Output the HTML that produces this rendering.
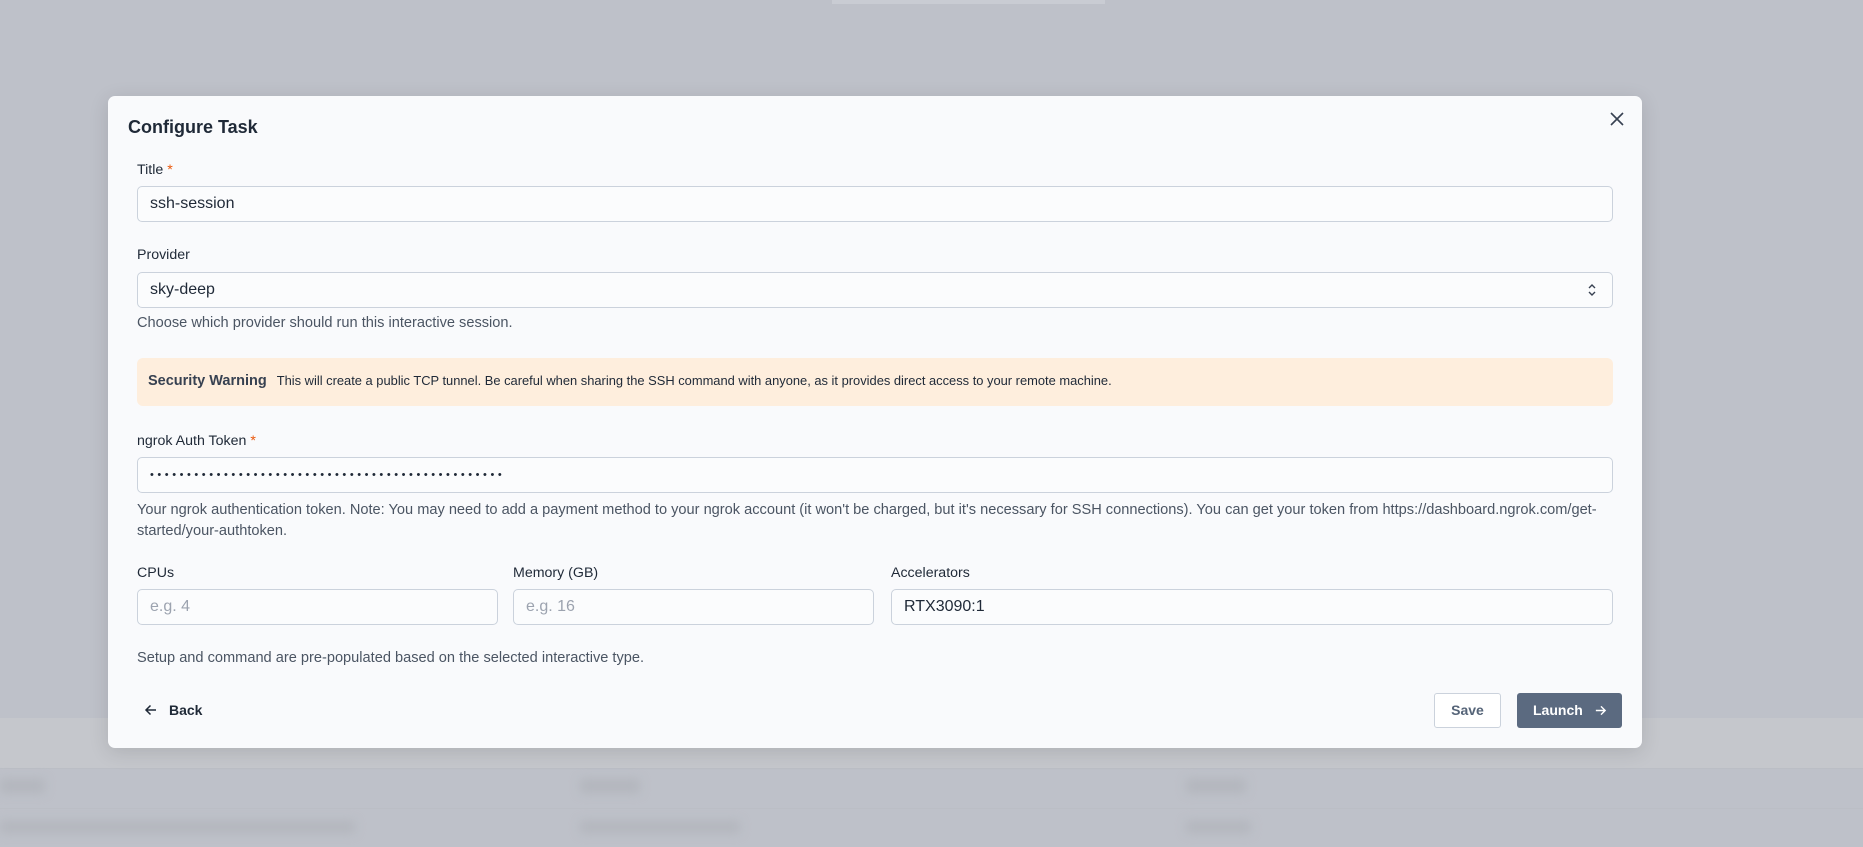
<!DOCTYPE html>
<html><head><meta charset="utf-8"><style>
*{box-sizing:border-box;margin:0;padding:0}
body{width:1863px;height:847px;background:#bec1c9;font-family:"Liberation Sans",sans-serif;position:relative;overflow:hidden;color:#1f2937}
.a{position:absolute;white-space:nowrap}
.modal{position:absolute;left:108px;top:96px;width:1534px;height:652px;background:#f9fafc;border-radius:7px;box-shadow:0 4px 20px rgba(0,0,0,.12)}
.lbl{font-size:14.2px;color:#1f2937}
.star{color:#ea580c}
.inp{position:absolute;height:36px;border:1px solid #cbd2dc;border-radius:5px;background:#fbfcfd;font-size:16px;padding:0 12px;line-height:34px;color:#1f2937}
.help{font-size:14.6px;color:#4b5563}
.blur{position:absolute;background:#b3b6bd;height:14px;border-radius:3px;filter:blur(5px)}
</style></head><body>
<div class="a" style="left:832px;top:0;width:273px;height:4px;background:#c9ccd3"></div>
<div class="a" style="left:0;top:718px;width:1863px;height:50px;background:#c5c7cc"></div>
<div class="a" style="left:0;top:768px;width:1863px;height:1px;background:#bbbec5"></div>
<div class="a" style="left:0;top:808px;width:1863px;height:1px;background:#bbbec5"></div>
<div class="blur" style="left:0;top:779px;width:45px"></div>
<div class="blur" style="left:580px;top:779px;width:60px"></div>
<div class="blur" style="left:1186px;top:779px;width:60px"></div>
<div class="blur" style="left:0;top:821px;width:355px;height:12px"></div>
<div class="blur" style="left:580px;top:821px;width:160px;height:12px"></div>
<div class="blur" style="left:1186px;top:821px;width:65px;height:12px"></div>

<div class="modal"></div>
<div class="a" style="left:128px;top:117px;font-size:18px;font-weight:bold;color:#1f2937">Configure Task</div>
<svg class="a" style="left:1609px;top:111px" width="16" height="16" viewBox="0 0 16 16"><path d="M2 2L14 14M14 2L2 14" stroke="#374151" stroke-width="1.6"/></svg>

<div class="a lbl" style="left:137px;top:162px">Title <span class="star">*</span></div>
<div class="inp" style="left:137px;top:186px;width:1476px">ssh-session</div>

<div class="a lbl" style="left:137px;top:247px">Provider</div>
<div class="inp" style="left:137px;top:272px;width:1476px">sky-deep</div>
<svg class="a" style="left:1587px;top:281px" width="10" height="18" viewBox="0 0 10 18"><path d="M2 7L5 4L8 7M2 11L5 14L8 11" stroke="#374151" stroke-width="1.4" fill="none"/></svg>
<div class="a help" style="left:137px;top:315px">Choose which provider should run this interactive session.</div>

<div class="a" style="left:137px;top:358px;width:1476px;height:48px;background:#feeedd;border-radius:6px"></div>
<div class="a" style="left:148px;top:373px;font-size:14.5px;font-weight:bold;color:#374151">Security Warning <span style="font-weight:normal;font-size:12.9px;margin-left:6px;color:#1f2937">This will create a public TCP tunnel. Be careful when sharing the SSH command with anyone, as it provides direct access to your remote machine.</span></div>

<div class="a lbl" style="left:137px;top:433px">ngrok Auth Token <span class="star">*</span></div>
<div class="inp" style="left:137px;top:457px;width:1476px;font-size:11px;letter-spacing:3.55px">••••••••••••••••••••••••••••••••••••••••••••••••</div>
<div class="a help" style="left:137px;top:500px;line-height:21px">Your ngrok authentication token. Note: You may need to add a payment method to your ngrok account (it won't be charged, but it's necessary for SSH connections). You can get your token from https://dashboard.ngrok.com/get-<br>started/your-authtoken.</div>

<div class="a lbl" style="left:137px;top:565px">CPUs</div>
<div class="a lbl" style="left:513px;top:565px">Memory (GB)</div>
<div class="a lbl" style="left:891px;top:565px">Accelerators</div>
<div class="inp" style="left:137px;top:589px;width:361px;color:#9ca3af">e.g. 4</div>
<div class="inp" style="left:513px;top:589px;width:361px;color:#9ca3af">e.g. 16</div>
<div class="inp" style="left:891px;top:589px;width:722px">RTX3090:1</div>

<div class="a help" style="left:137px;top:650px">Setup and command are pre-populated based on the selected interactive type.</div>

<svg class="a" style="left:144px;top:703px" width="14" height="14" viewBox="0 0 14 14"><path d="M12 7H2M6.5 2.5L2 7L6.5 11.5" stroke="#1f2937" stroke-width="1.5" fill="none"/></svg>
<div class="a" style="left:169px;top:702px;font-size:14px;font-weight:bold;color:#1f2937">Back</div>

<div class="a" style="left:1434px;top:693px;width:67px;height:35px;border:1px solid #cbd2dc;border-radius:3px;background:#fff;font-size:14px;font-weight:bold;color:#556478;text-align:center;line-height:33px">Save</div>
<div class="a" style="left:1517px;top:693px;width:105px;height:35px;border-radius:3px;background:#5b6a80;font-size:14px;font-weight:bold;color:#fff;line-height:35px;padding-left:16px">Launch
<svg style="position:absolute;left:77px;top:11px" width="13" height="13" viewBox="0 0 14 14"><path d="M2 7H12M7.5 2.5L12 7L7.5 11.5" stroke="#fff" stroke-width="1.5" fill="none"/></svg></div>
</body></html>
